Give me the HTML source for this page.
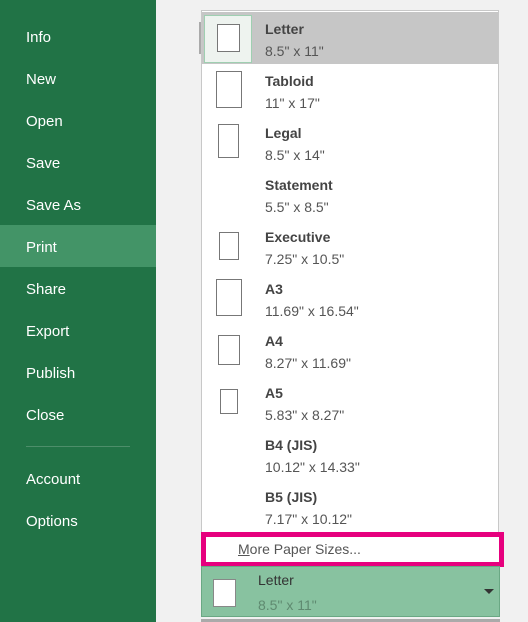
<!DOCTYPE html>
<html><head><style>
*{margin:0;padding:0;box-sizing:border-box}
body{width:528px;height:622px;overflow:hidden;background:#f1f1f1;font-family:"Liberation Sans",sans-serif;position:relative}
.side{position:absolute;left:0;top:0;width:156px;height:622px;background:#217346}
.side div{position:absolute;left:26px;color:#fff;font-size:15px}
.hl{position:absolute;left:0;top:225px;width:156px;height:42px;background:#439467}
.sep{position:absolute;left:26px;top:446px;width:104px;height:1px;background:#4d8e6a}
.panel{position:absolute;left:201px;top:10px;width:298px;height:524px;background:#fff;border:1px solid #c8c8c8}
.item{position:absolute;left:0;width:296px;height:52px}
.item b{position:absolute;left:63px;top:9px;font-size:14px;color:#444}
.item span{position:absolute;left:63px;top:31px;font-size:14px;color:#555}
.ic{position:absolute;border:1px solid #777;background:#fff}
.pink{position:absolute;left:201px;top:532px;width:303px;height:35px;border:5px solid #e6007e;background:#fff}
.pink span{position:absolute;left:32px;top:4px;font-size:14px;color:#555}
.sel{position:absolute;left:201px;top:566px;width:299px;height:51px;background:#88c2a0;border:1px solid #6aa884}
</style></head><body>
<div class="side">
<div class="hl" style="left:0"></div>
<div style="top:29px">Info</div>
<div style="top:71px">New</div>
<div style="top:113px">Open</div>
<div style="top:155px">Save</div>
<div style="top:197px">Save As</div>
<div style="top:239px">Print</div>
<div style="top:281px">Share</div>
<div style="top:323px">Export</div>
<div style="top:365px">Publish</div>
<div style="top:407px">Close</div>
<div class="sep" style="left:26px"></div>
<div style="top:471px">Account</div>
<div style="top:513px">Options</div>
</div>
<div style="position:absolute;left:199px;top:22px;width:2px;height:32px;background:#aaa"></div>
<div class="panel">
<div class="item" style="top:1px;background:#c6c6c6"><div style="position:absolute;left:2px;top:3px;width:48px;height:48px;background:#eef3ef;border:1px solid #9fcfb1"></div><div class="ic" style="left:15px;top:12px;width:23px;height:28px"></div><b>Letter</b><span>8.5" x 11"</span></div>
<div class="item" style="top:53px"><div class="ic" style="left:14px;top:7px;width:26px;height:37px"></div><b>Tabloid</b><span>11" x 17"</span></div>
<div class="item" style="top:105px"><div class="ic" style="left:16px;top:8px;width:21px;height:34px"></div><b>Legal</b><span>8.5" x 14"</span></div>
<div class="item" style="top:157px"><b>Statement</b><span>5.5" x 8.5"</span></div>
<div class="item" style="top:209px"><div class="ic" style="left:17px;top:12px;width:20px;height:28px"></div><b>Executive</b><span>7.25" x 10.5"</span></div>
<div class="item" style="top:261px"><div class="ic" style="left:14px;top:7px;width:26px;height:37px"></div><b>A3</b><span>11.69" x 16.54"</span></div>
<div class="item" style="top:313px"><div class="ic" style="left:16px;top:11px;width:22px;height:30px"></div><b>A4</b><span>8.27" x 11.69"</span></div>
<div class="item" style="top:365px"><div class="ic" style="left:18px;top:13px;width:18px;height:25px"></div><b>A5</b><span>5.83" x 8.27"</span></div>
<div class="item" style="top:417px"><b>B4 (JIS)</b><span>10.12" x 14.33"</span></div>
<div class="item" style="top:469px"><b>B5 (JIS)</b><span>7.17" x 10.12"</span></div>
</div>
<div class="pink"><span><u>M</u>ore Paper Sizes...</span></div>
<div class="sel">
<div class="ic" style="left:11px;top:12px;width:23px;height:28px;border-color:#888"></div>
<div style="position:absolute;left:56px;top:5px;font-size:14px;color:#333">Letter</div>
<div style="position:absolute;left:56px;top:30px;font-size:14px;color:#5f8a70">8.5" x 11"</div>
<div style="position:absolute;left:282px;top:22px;width:0;height:0;border-left:5px solid transparent;border-right:5px solid transparent;border-top:5px solid #333"></div>
</div>
<div style="position:absolute;left:201px;top:619px;width:299px;height:3px;background:#aaa"></div>
</body></html>
